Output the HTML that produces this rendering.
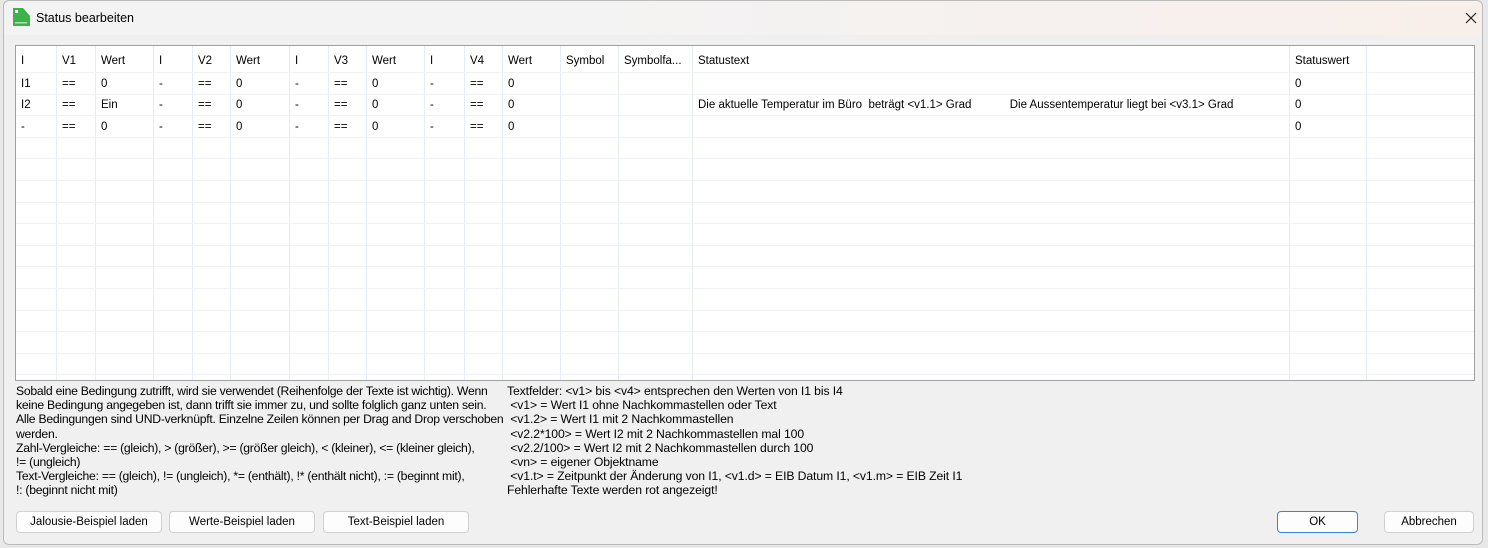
<!DOCTYPE html><html><head><style>
body{margin:0;width:1488px;height:548px;background:#e8e8e8;font-family:"Liberation Sans",sans-serif;font-size:11.5px;color:#000;position:relative;overflow:hidden}
.dlg{position:absolute;left:3px;top:0;width:1480px;height:545px;background:#f0f0f0;border:1px solid #bbb;border-radius:6px;box-sizing:border-box}
.title{position:absolute;left:0;top:0;right:0;height:34px;background:linear-gradient(90deg,#f3f3f3 0%,#f3f3f3 40%,#f9efea 100%);border-radius:6px 6px 0 0}
.t{position:absolute;white-space:nowrap}
.tbl{position:absolute;left:15px;top:45px;width:1460px;height:336px;background:#fff;border:1px solid #a0a0a0;box-sizing:border-box;overflow:hidden}
.v{position:absolute;top:0;bottom:0;width:1px;background:#e6ecf3}
.h{position:absolute;left:0;right:0;height:1px;background:#eef1f5}
.btn{position:absolute;height:22px;background:#fdfdfd;border:1px solid #d0d0d0;border-radius:4px;box-sizing:border-box;text-align:center;line-height:20px;font-size:11.5px}
.help{position:absolute;font-size:12.2px;line-height:14.2px;letter-spacing:-0.1px;white-space:nowrap}
</style></head><body>
<div class="dlg">
<div class="title">
<svg style="position:absolute;left:9px;top:7px" width="17" height="18" viewBox="0 0 17 18"><path d="M0 0h10l7 8v10H0z" fill="#3cb34a"/><rect x="2" y="2" width="3" height="3" fill="#fff"/><rect x="2" y="14" width="12" height="1.5" fill="#a9e0ae"/></svg>
<div class="t" style="left:32px;top:10px;font-size:12.5px">Status bearbeiten</div>
<svg style="position:absolute;left:1461px;top:11px" width="12" height="12" viewBox="0 0 12 12"><path d="M1 1L11 11M11 1L1 11" stroke="#222" stroke-width="1.2"/></svg>
</div>
</div>
<div class="tbl" id="tb"></div>
<div class="help" style="left:16px;top:384px;letter-spacing:-0.25px">Sobald eine Bedingung zutrifft, wird sie verwendet (Reihenfolge der Texte ist wichtig). Wenn<br>keine Bedingung angegeben ist, dann trifft sie immer zu, und sollte folglich ganz unten sein.<br>Alle Bedingungen sind UND-verknüpft. Einzelne Zeilen können per Drag and Drop verschoben<br>werden.<br>Zahl-Vergleiche: == (gleich), &gt; (größer), &gt;= (größer gleich), &lt; (kleiner), &lt;= (kleiner gleich),<br>!= (ungleich)<br>Text-Vergleiche: == (gleich), != (ungleich), *= (enthält), !* (enthält nicht), := (beginnt mit),<br>!: (beginnt nicht mit)</div>
<div class="help" style="left:507px;top:384px">Textfelder: &lt;v1&gt; bis &lt;v4&gt; entsprechen den Werten von I1 bis I4<br>&nbsp;&lt;v1&gt; = Wert I1 ohne Nachkommastellen oder Text<br>&nbsp;&lt;v1.2&gt; = Wert I1 mit 2 Nachkommastellen<br>&nbsp;&lt;v2.2*100&gt; = Wert I2 mit 2 Nachkommastellen mal 100<br>&nbsp;&lt;v2.2/100&gt; = Wert I2 mit 2 Nachkommastellen durch 100<br>&nbsp;&lt;vn&gt; = eigener Objektname<br>&nbsp;&lt;v1.t&gt; = Zeitpunkt der Änderung von I1, &lt;v1.d&gt; = EIB Datum I1, &lt;v1.m&gt; = EIB Zeit I1<br>Fehlerhafte Texte werden rot angezeigt!</div>
<div class="btn" style="left:16px;top:511px;width:146px">Jalousie-Beispiel laden</div>
<div class="btn" style="left:169px;top:511px;width:146px">Werte-Beispiel laden</div>
<div class="btn" style="left:323px;top:511px;width:146px">Text-Beispiel laden</div>
<div class="btn" style="left:1277px;top:511px;width:81px;border:1px solid #3a84d6">OK</div>
<div class="btn" style="left:1384px;top:511px;width:90px">Abbrechen</div>
<script>
var tb=document.getElementById('tb');
var cols=[15,56,95,153,192,230,289,328,366,424,464,502,560,618,692,1289,1366];
var html='';
for(var i=1;i<cols.length;i++)html+='<div class="v" style="left:'+(cols[i]-16)+'px"></div>';
for(var y=72;y<380;y+=21.6)html+='<div class="h" style="top:'+Math.round(y-46)+'px"></div>';
var rows=[["I","V1","Wert","I","V2","Wert","I","V3","Wert","I","V4","Wert","Symbol","Symbolfa...","Statustext","Statuswert"],
["I1","==","0","-","==","0","-","==","0","-","==","0","","","","0"],
["I2","==","Ein","-","==","0","-","==","0","-","==","0","","","Die aktuelle Temperatur im Büro&nbsp; beträgt &lt;v1.1&gt; Grad&nbsp;&nbsp;&nbsp;&nbsp;&nbsp;&nbsp;&nbsp;&nbsp;&nbsp;&nbsp;&nbsp;&nbsp;Die Aussentemperatur liegt bei &lt;v3.1&gt; Grad","0"],
["-","==","0","-","==","0","-","==","0","-","==","0","","","","0"]];
var ty=[55,78,99,121];
rows.forEach(function(r,ri){r.forEach(function(c,ci){if(c)html+='<div class="t" style="left:'+(cols[ci]-16+6)+'px;top:'+(ty[ri]-46)+'px">'+c+'</div>';});});
tb.innerHTML=html;
</script>
</body></html>
